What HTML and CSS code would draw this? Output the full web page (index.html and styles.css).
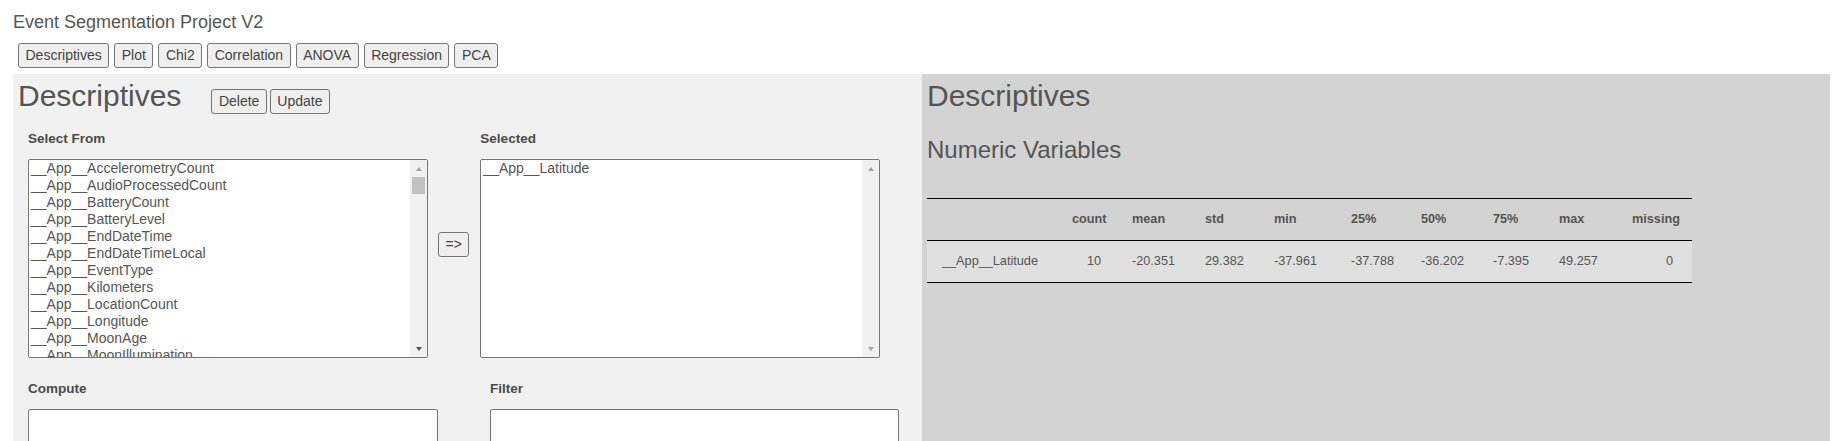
FILE: index.html
```html
<!DOCTYPE html>
<html lang="en">
<head>
  <meta charset="UTF-8" />
  <title>Event Segmentation Project V2</title>
  <link rel="stylesheet" href="styles.css">
</head>
<body>
  <div class="page">
    <div class="app-title">Event Segmentation Project V2</div>

    <!-- analysis tabs -->
    <div class="tabs">
      <button>Descriptives</button>
      <button>Plot</button>
      <button>Chi2</button>
      <button>Correlation</button>
      <button>ANOVA</button>
      <button>Regression</button>
      <button>PCA</button>
    </div>

    <div class="panels">
      <!-- left: settings -->
      <div class="panel panel-edit">
        <div class="panel-head">
          <h1>Descriptives</h1>
          <div class="head-actions">
            <button>Delete</button>
            <button>Update</button>
          </div>
        </div>

        <div class="picker">
          <div class="field">
            <label>Select From</label>
            <div class="listbox">
              <select multiple class="varlist" id="source"></select>
              <div class="scrollbar">
                <div class="sb-btn"><span class="arrow-up"></span></div>
                <div class="sb-thumb"></div>
                <div class="sb-btn sb-bottom"><span class="arrow-down"></span></div>
              </div>
            </div>
          </div>
          <button class="move">=&gt;</button>
          <div class="field">
            <label>Selected</label>
            <div class="listbox">
              <select multiple class="varlist" id="selected">
                <option>__App__Latitude</option>
              </select>
              <div class="scrollbar disabled">
                <div class="sb-btn"><span class="arrow-up"></span></div>
                <div class="sb-btn sb-bottom"><span class="arrow-down"></span></div>
              </div>
            </div>
          </div>
        </div>

        <div class="exprs">
          <div class="field">
            <label>Compute</label>
            <textarea></textarea>
          </div>
          <div class="field">
            <label>Filter</label>
            <textarea></textarea>
          </div>
        </div>
      </div>

      <!-- right: output -->
      <div class="panel panel-output">
        <h1>Descriptives</h1>
        <h2>Numeric Variables</h2>
        <table class="stats">
          <thead>
            <tr>
              <th></th>
              <th>count</th>
              <th>mean</th>
              <th>std</th>
              <th>min</th>
              <th>25%</th>
              <th>50%</th>
              <th>75%</th>
              <th>max</th>
              <th>missing</th>
            </tr>
          </thead>
          <tbody>
            <tr>
              <td>__App__Latitude</td>
              <td>10</td>
              <td>-20.351</td>
              <td>29.382</td>
              <td>-37.961</td>
              <td>-37.788</td>
              <td>-36.202</td>
              <td>-7.395</td>
              <td>49.257</td>
              <td>0</td>
            </tr>
          </tbody>
        </table>
      </div>
    </div>
  </div>

  <script>
    const source = document.getElementById("source");

    // variables still available (Latitude is already selected)
    const appVars = [
      "AccelerometryCount", "AudioProcessedCount", "BatteryCount", "BatteryLevel",
      "EndDateTime", "EndDateTimeLocal", "EventType", "Kilometers",
      "LocationCount", "Longitude", "MoonAge", "MoonIllumination",
      "MoonPhase", "PedometerCount", "ScreenCount", "Seconds",
      "StartDateTime", "StartDateTimeLocal", "Steps", "SunAltitude",
      "Sunrise", "Sunset", "Temperature", "TimeZone", "WeatherCondition", "WifiCount"
    ];

    appVars.forEach(function (name) {
      const opt = document.createElement("option");
      opt.textContent = "__App__" + name;
      source.appendChild(opt);
    });

    // survey questions
    for (let i = 1; i <= 90; i++) {
      const opt = document.createElement("option");
      opt.textContent = "__Survey__Q" + i;
      source.appendChild(opt);
    }
  </script>
</body>
</html>
```

FILE: styles.css
```css
body {
  margin: 0;
  font-family: "Liberation Sans", Arial, sans-serif;
  color: #555;
  background: #fff;
}

.page {
  padding: 12px 0 0 13px;
}

.app-title {
  font-size: 18px;
  line-height: 20px;
  margin-bottom: 11px;
}

button {
  font-family: "Liberation Sans", Arial, sans-serif;
  font-size: 14px;
  line-height: 17px;
  padding: 3px 6.5px;
  color: #444;
  background: #efefef;
  border: 1px solid #767676;
  border-radius: 3px;
}

.tabs {
  display: flex;
  gap: 5px;
  padding-left: 5px;
  margin-bottom: 6px;
}

.panels {
  display: grid;
  grid-template-columns: 909px 908px;
  min-height: 380px;
}

.panel {
  padding: 5px;
}

.panel-edit {
  background: #f1f1f1;
}

.panel-output {
  background: #d3d3d3;
}

h1 {
  font-size: 30px;
  line-height: 34px;
  font-weight: normal;
  margin: 0;
}

h2 {
  font-size: 24px;
  line-height: 27px;
  font-weight: normal;
  margin: 23px 0 35px;
}

.panel-head {
  display: flex;
  align-items: baseline;
  gap: 30px;
}

.head-actions {
  display: flex;
  gap: 3px;
}

/* variable picker */
.picker {
  display: flex;
  align-items: center;
  margin-top: 17px;
  padding-left: 10px;
}

.field label {
  display: block;
  font-size: 13.5px;
  line-height: 16px;
  font-weight: bold;
  color: #4a4a4a;
  margin-bottom: 12px;
}

.listbox {
  display: flex;
  width: 400px;
  height: 199px;
  box-sizing: border-box;
  border: 1px solid #767676;
  border-radius: 2px;
  background: #fff;
  overflow: hidden;
}

.varlist {
  flex: 1;
  height: 100%;
  border: none;
  padding: 0;
  margin: 0;
  font-family: "Liberation Sans", Arial, sans-serif;
  font-size: 14px;
  color: #555;
  background: #fff;
  overflow: hidden;
  outline: none;
}

.varlist option {
  padding: 0 2px;
  line-height: 16px;
  height: 17px;
  box-sizing: border-box;
}

/* classic scrollbar */
.scrollbar {
  width: 17px;
  display: flex;
  flex-direction: column;
  background: #f1f1f1;
}

.sb-btn {
  height: 17px;
  display: flex;
  align-items: center;
  justify-content: center;
}

.sb-bottom {
  margin-top: auto;
}

.sb-thumb {
  height: 17px;
  margin: 0 2px;
  background: #c1c1c1;
}

.arrow-up,
.arrow-down {
  width: 0;
  height: 0;
  border-left: 3.5px solid transparent;
  border-right: 3.5px solid transparent;
}

.arrow-up {
  border-bottom: 4px solid #a3a3a3;
}

.arrow-down {
  border-top: 4px solid #505050;
}

.scrollbar.disabled .arrow-down {
  border-top-color: #a3a3a3;
}

.move {
  margin: 0 11px 0 10px;
}

.exprs {
  display: grid;
  grid-template-columns: 410px 409px;
  column-gap: 52px;
  margin-top: 23px;
  padding-left: 10px;
}

.exprs textarea {
  display: block;
  width: 100%;
  height: 60px;
  box-sizing: border-box;
  border: 1px solid #767676;
  border-radius: 2px;
  background: #fff;
  resize: none;
}

/* stats table */
.stats {
  width: 765px;
  table-layout: fixed;
  border-collapse: separate;
  border-spacing: 0;
  font-size: 12.7px;
}

.stats th,
.stats td {
  box-sizing: border-box;
  line-height: 41px;
  padding: 0 12px;
  text-align: left;
  white-space: nowrap;
  border-bottom: 1px solid #000;
}

.stats th {
  border-top: 1px solid #000;
  font-weight: bold;
}

.stats td {
  background: #e0e0e0;
}

.stats th:nth-child(1), .stats td:nth-child(1) { width: 133px; padding-left: 15px; }
.stats th:nth-child(2), .stats td:nth-child(2) { width: 60px; text-align: right; padding-right: 19px; }
.stats th:nth-child(3), .stats td:nth-child(3) { width: 73px; }
.stats th:nth-child(4), .stats td:nth-child(4) { width: 69px; }
.stats th:nth-child(5), .stats td:nth-child(5) { width: 77px; }
.stats th:nth-child(6), .stats td:nth-child(6) { width: 70px; }
.stats th:nth-child(7), .stats td:nth-child(7) { width: 72px; }
.stats th:nth-child(8), .stats td:nth-child(8) { width: 66px; }
.stats th:nth-child(9), .stats td:nth-child(9) { width: 73px; }
.stats th:nth-child(10), .stats td:nth-child(10) { width: 72px; text-align: right; padding-right: 19px; }
```
